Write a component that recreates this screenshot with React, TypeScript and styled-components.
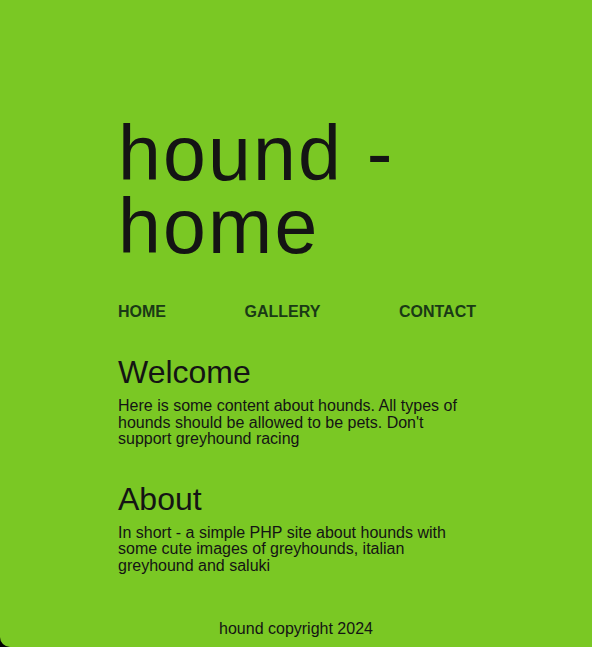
import React from "react";
import styled, { createGlobalStyle } from "styled-components";

const Global = createGlobalStyle`
  html, body { margin: 0; padding: 0; background: #000; }
  body { font-family: "Liberation Sans", Arial, sans-serif; }
`;

const Page = styled.div`
  min-height: 647px;
  background: #7ac824;
  color: #141414;
  border-bottom-left-radius: 10px;
  display: flex;
  flex-direction: column;
  padding: 117px 116px 0 118px;
  box-sizing: border-box;
`;

const Title = styled.h1`
  margin: 0;
  font-size: 77px;
  line-height: 73px;
  font-weight: 400;
  letter-spacing: 2.2px;
`;

const Nav = styled.nav`
  margin-top: 40px;
  display: flex;
  justify-content: space-between;
`;

const NavLink = styled.a`
  font-size: 16px;
  font-weight: 700;
  color: #1a3a16;
  text-decoration: none;
`;

const Section = styled.section`
  margin-top: 33px;
`;

const Heading = styled.h2`
  margin: 0 0 7px;
  font-size: 32px;
  font-weight: 400;
`;

const Text = styled.p`
  margin: 0;
  font-size: 16px;
  line-height: 16.5px;
`;

const Footer = styled.footer`
  margin: 46px -116px 0 -118px;
  text-align: center;
  font-size: 16px;
`;

export default function App() {
  return (
    <>
      <Global />
      <Page>
        <Title>hound - home</Title>
        <Nav>
          <NavLink href="#">HOME</NavLink>
          <NavLink href="#">GALLERY</NavLink>
          <NavLink href="#">CONTACT</NavLink>
        </Nav>
        <Section>
          <Heading>Welcome</Heading>
          <Text>
            Here is some content about hounds. All types of hounds should be
            allowed to be pets. Don't support greyhound racing
          </Text>
        </Section>
        <Section>
          <Heading>About</Heading>
          <Text>
            In short - a simple PHP site about hounds with some cute images of
            greyhounds, italian greyhound and saluki
          </Text>
        </Section>
        <Footer>hound copyright 2024</Footer>
      </Page>
    </>
  );
}
